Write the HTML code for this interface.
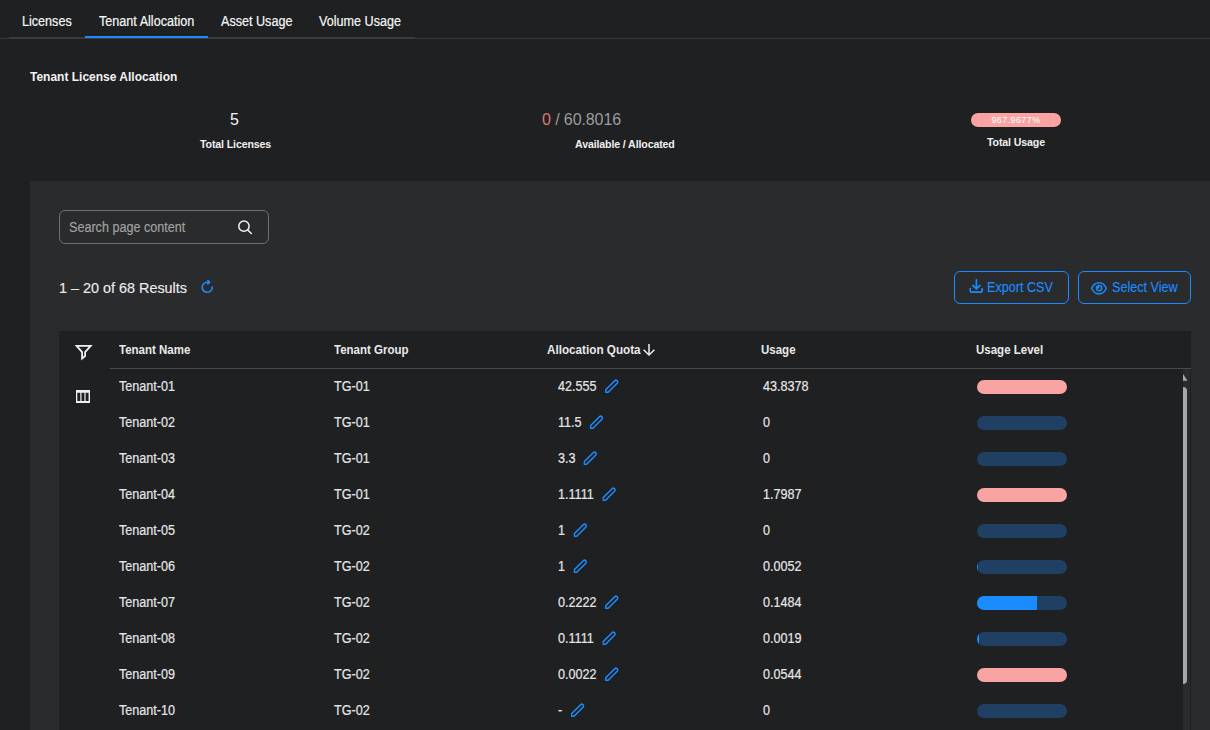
<!DOCTYPE html>
<html><head><meta charset="utf-8">
<style>
*{box-sizing:border-box;margin:0;padding:0}
html,body{width:1210px;height:730px;overflow:hidden;background:#1f2022;font-family:"Liberation Sans",sans-serif;color:#e6e6e6}
.a{position:absolute;white-space:nowrap}
.tab{font-size:14px;line-height:13px;top:15px;transform:scaleX(0.9);transform-origin:0 0;color:#f6f6f6;-webkit-text-stroke:0.2px #f6f6f6}
.line1{left:0;top:38px;width:1210px;height:1px;background:#39393b}
.line2{left:9px;top:37px;width:406px;height:2px;background:#3b3b3d}
.act{left:85px;top:36px;width:123px;height:2px;background:#1a8cff}
.title{left:30px;top:71px;font-size:12px;line-height:12px;font-weight:700;color:#f2f2f2}
.big{font-size:16px;line-height:16px;top:112px}
.lbl{font-size:10.6px;line-height:11px;letter-spacing:-0.12px;font-weight:700;color:#f0f0f0}
.pill{left:971px;top:113px;width:90px;height:14px;border-radius:7px;background:#f9a3a3;color:#fff;font-size:9px;line-height:14px;text-align:center;letter-spacing:0.4px}
.panel{left:30px;top:181px;width:1180px;height:549px;background:#2a2b2d}
.search{left:59px;top:210px;width:210px;height:34px;border:1px solid #707072;border-radius:6px}
.ph{left:69px;top:221px;font-size:14px;transform:scaleX(0.9);transform-origin:0 0;line-height:13px;color:#a3a3a3;-webkit-text-stroke:0.15px #a3a3a3}
.res{left:59px;top:281px;font-size:14.4px;line-height:14px;color:#ececec;-webkit-text-stroke:0.15px #ececec}
.btn{top:271px;height:33px;border:1px solid #1a8cff;border-radius:6px}
.btxt{top:281px;font-size:14px;transform:scaleX(0.9);transform-origin:0 0;line-height:13px;color:#1a8cff;-webkit-text-stroke:0.15px #1a8cff}
.table{left:59px;top:331px;width:1132px;height:399px;background:#1f2022}
.hline{left:110px;top:368px;width:1081px;height:1px;background:#4a4a4c}
.th{top:344px;font-size:13px;transform:scaleX(0.885);transform-origin:0 0;line-height:12px;font-weight:700;color:#e9e9e9}
.td{font-size:14px;line-height:13px;transform:scaleX(0.9);transform-origin:0 0;color:#e6e6e6;-webkit-text-stroke:0.2px #e6e6e6}
.bar{left:977px;width:90px;height:14px;border-radius:7px;background:#1f3f63;overflow:hidden}
.bar.pink{background:#f9a3a3}
.bar i{display:block;height:100%;background:#1a8cff}
.track{left:1183px;top:369px;width:7px;height:361px;background:#2b2b2b}
</style></head><body>
<div class="a tab" style="left:22px">Licenses</div>
<div class="a tab" style="left:99px">Tenant Allocation</div>
<div class="a tab" style="left:221px">Asset Usage</div>
<div class="a tab" style="left:319px">Volume Usage</div>
<div class="a line1"></div>
<div class="a line2"></div>
<div class="a act"></div>

<div class="a title">Tenant License Allocation</div>
<div class="a big" style="left:230px;color:#f2f2f2">5</div>
<div class="a lbl" style="left:200px;top:139px">Total Licenses</div>
<div class="a big" style="left:542px;color:#9c9c9c;letter-spacing:-0.1px"><span style="color:#de776e">0</span> / 60.8016</div>
<div class="a lbl" style="left:575px;top:139px">Available / Allocated</div>
<div class="a pill">967.9677%</div>
<div class="a lbl" style="left:987px;top:137px">Total Usage</div>

<div class="a panel"></div>
<div class="a search"></div>
<div class="a ph">Search page content</div>
<svg class="a" style="left:234px;top:216px" width="20" height="20" viewBox="0 0 20 20"><circle cx="9.95" cy="10.2" r="5.15" fill="none" stroke="#f2f2f2" stroke-width="1.5"/><path d="M13.8 14 L17.3 17.5" stroke="#f2f2f2" stroke-width="1.5" stroke-linecap="round"/></svg>
<div class="a res">1 – 20 of 68 Results</div>
<svg class="a" style="left:200px;top:278px" width="16" height="16" viewBox="0 0 16 16" fill="none" stroke="#1a8cff" stroke-width="1.6" stroke-linecap="round" stroke-linejoin="round"><path d="M12.3 9.0 A5.05 5.05 0 1 1 7.25 4.2 L9.4 4.2"/><path d="M7.8 2.5 L9.6 4.2 L7.8 5.9"/></svg>

<div class="a btn" style="left:954px;width:115px"></div>
<svg class="a" style="left:968px;top:278px" width="16" height="16" viewBox="0 0 16 16" fill="none" stroke="#1a8cff" stroke-width="1.7" stroke-linecap="round" stroke-linejoin="round"><path d="M2.3 10.5 V13 Q2.3 14.2 3.5 14.2 H12.9 Q14.1 14.2 14.1 13 V10.5"/><path d="M8.4 1.8 V10.5"/><path d="M4.8 7.5 L8.4 10.6 L11.9 7.5"/></svg>
<div class="a btxt" style="left:987px">Export CSV</div>
<div class="a btn" style="left:1078px;width:113px"></div>
<svg class="a" style="left:1089px;top:280px" width="20" height="16" viewBox="0 0 20 16" fill="none" stroke="#1a8cff" stroke-width="1.5"><path d="M2.65 8.3 C4.2 4.6 6.8 2.65 10 2.65 C13.2 2.65 15.8 4.6 17.35 8.3 C15.8 12 13.2 13.95 10 13.95 C6.8 13.95 4.2 12 2.65 8.3 Z"/><circle cx="10.1" cy="8.1" r="2.65"/><path d="M10.3 8.4 V5.9 A2.3 2.3 0 0 0 7.8 8.4 Z" fill="#1a8cff" stroke="none"/></svg>
<div class="a btxt" style="left:1112px">Select View</div>

<div class="a table"></div>
<svg class="a" style="left:75px;top:344px" width="18" height="17" viewBox="0 0 18 17" fill="none" stroke="#f0f0f0" stroke-width="1.8" stroke-linejoin="miter"><path d="M1.6 1.9 L15.7 1.9 L10.1 8.1 L10.1 12 L7.1 14.6 L7.1 8.1 Z"/></svg>
<svg class="a" style="left:75px;top:389px" width="16" height="15" viewBox="0 0 16 15"><path fill="#f0f0f0" fill-rule="evenodd" d="M1 1 H15 V14 H1 Z M2.3 3.8 V11.9 H5.3 V3.8 Z M6.5 3.8 V11.9 H9.4 V3.8 Z M10.6 3.8 V11.9 H13.6 V3.8 Z"/></svg>
<div class="a hline"></div>
<div class="a th" style="left:119px">Tenant Name</div>
<div class="a th" style="left:334px">Tenant Group</div>
<div class="a th" style="left:547px;transform:scaleX(0.9)">Allocation Quota</div>
<svg class="a" style="left:641px;top:342px" width="16" height="16" viewBox="0 0 16 16" fill="none" stroke="#f0f0f0" stroke-width="1.5"><path d="M8 2 V12.6"/><path d="M2.6 7.8 L8 13 L13.4 7.8"/></svg>
<div class="a th" style="left:761px">Usage</div>
<div class="a th" style="left:976px">Usage Level</div>

<!--ROWS-->
<div class="a td" style="left:119px;top:380px">Tenant-01</div>
<div class="a td" style="left:334px;top:380px">TG-01</div>
<div class="a td" style="left:558px;top:380px">42.555<svg width="14" height="14" viewBox="0 0 14 14" style="vertical-align:top;margin-left:10px;margin-top:-1px;transform:scaleX(1.111)" fill="none" stroke="#1a8cff" stroke-width="1.5" stroke-linejoin="round"><path d="M0.75 10.78 L9.76 1.76 A1.75 1.75 0 0 1 12.24 4.24 L3.22 13.25 L0.75 13.25 Z"/></svg></div>
<div class="a td" style="left:763px;top:380px">43.8378</div>
<div class="a bar pink" style="top:380px"></div>
<div class="a td" style="left:119px;top:416px">Tenant-02</div>
<div class="a td" style="left:334px;top:416px">TG-01</div>
<div class="a td" style="left:558px;top:416px">11.5<svg width="14" height="14" viewBox="0 0 14 14" style="vertical-align:top;margin-left:10px;margin-top:-1px;transform:scaleX(1.111)" fill="none" stroke="#1a8cff" stroke-width="1.5" stroke-linejoin="round"><path d="M0.75 10.78 L9.76 1.76 A1.75 1.75 0 0 1 12.24 4.24 L3.22 13.25 L0.75 13.25 Z"/></svg></div>
<div class="a td" style="left:763px;top:416px">0</div>
<div class="a bar" style="top:416px"></div>
<div class="a td" style="left:119px;top:452px">Tenant-03</div>
<div class="a td" style="left:334px;top:452px">TG-01</div>
<div class="a td" style="left:558px;top:452px">3.3<svg width="14" height="14" viewBox="0 0 14 14" style="vertical-align:top;margin-left:10px;margin-top:-1px;transform:scaleX(1.111)" fill="none" stroke="#1a8cff" stroke-width="1.5" stroke-linejoin="round"><path d="M0.75 10.78 L9.76 1.76 A1.75 1.75 0 0 1 12.24 4.24 L3.22 13.25 L0.75 13.25 Z"/></svg></div>
<div class="a td" style="left:763px;top:452px">0</div>
<div class="a bar" style="top:452px"></div>
<div class="a td" style="left:119px;top:488px">Tenant-04</div>
<div class="a td" style="left:334px;top:488px">TG-01</div>
<div class="a td" style="left:558px;top:488px">1.1111<svg width="14" height="14" viewBox="0 0 14 14" style="vertical-align:top;margin-left:10px;margin-top:-1px;transform:scaleX(1.111)" fill="none" stroke="#1a8cff" stroke-width="1.5" stroke-linejoin="round"><path d="M0.75 10.78 L9.76 1.76 A1.75 1.75 0 0 1 12.24 4.24 L3.22 13.25 L0.75 13.25 Z"/></svg></div>
<div class="a td" style="left:763px;top:488px">1.7987</div>
<div class="a bar pink" style="top:488px"></div>
<div class="a td" style="left:119px;top:524px">Tenant-05</div>
<div class="a td" style="left:334px;top:524px">TG-02</div>
<div class="a td" style="left:558px;top:524px">1<svg width="14" height="14" viewBox="0 0 14 14" style="vertical-align:top;margin-left:10px;margin-top:-1px;transform:scaleX(1.111)" fill="none" stroke="#1a8cff" stroke-width="1.5" stroke-linejoin="round"><path d="M0.75 10.78 L9.76 1.76 A1.75 1.75 0 0 1 12.24 4.24 L3.22 13.25 L0.75 13.25 Z"/></svg></div>
<div class="a td" style="left:763px;top:524px">0</div>
<div class="a bar" style="top:524px"></div>
<div class="a td" style="left:119px;top:560px">Tenant-06</div>
<div class="a td" style="left:334px;top:560px">TG-02</div>
<div class="a td" style="left:558px;top:560px">1<svg width="14" height="14" viewBox="0 0 14 14" style="vertical-align:top;margin-left:10px;margin-top:-1px;transform:scaleX(1.111)" fill="none" stroke="#1a8cff" stroke-width="1.5" stroke-linejoin="round"><path d="M0.75 10.78 L9.76 1.76 A1.75 1.75 0 0 1 12.24 4.24 L3.22 13.25 L0.75 13.25 Z"/></svg></div>
<div class="a td" style="left:763px;top:560px">0.0052</div>
<div class="a bar" style="top:560px"><i style="width:0.52%"></i></div>
<div class="a td" style="left:119px;top:596px">Tenant-07</div>
<div class="a td" style="left:334px;top:596px">TG-02</div>
<div class="a td" style="left:558px;top:596px">0.2222<svg width="14" height="14" viewBox="0 0 14 14" style="vertical-align:top;margin-left:10px;margin-top:-1px;transform:scaleX(1.111)" fill="none" stroke="#1a8cff" stroke-width="1.5" stroke-linejoin="round"><path d="M0.75 10.78 L9.76 1.76 A1.75 1.75 0 0 1 12.24 4.24 L3.22 13.25 L0.75 13.25 Z"/></svg></div>
<div class="a td" style="left:763px;top:596px">0.1484</div>
<div class="a bar" style="top:596px"><i style="width:66.8%"></i></div>
<div class="a td" style="left:119px;top:632px">Tenant-08</div>
<div class="a td" style="left:334px;top:632px">TG-02</div>
<div class="a td" style="left:558px;top:632px">0.1111<svg width="14" height="14" viewBox="0 0 14 14" style="vertical-align:top;margin-left:10px;margin-top:-1px;transform:scaleX(1.111)" fill="none" stroke="#1a8cff" stroke-width="1.5" stroke-linejoin="round"><path d="M0.75 10.78 L9.76 1.76 A1.75 1.75 0 0 1 12.24 4.24 L3.22 13.25 L0.75 13.25 Z"/></svg></div>
<div class="a td" style="left:763px;top:632px">0.0019</div>
<div class="a bar" style="top:632px"><i style="width:1.71%"></i></div>
<div class="a td" style="left:119px;top:668px">Tenant-09</div>
<div class="a td" style="left:334px;top:668px">TG-02</div>
<div class="a td" style="left:558px;top:668px">0.0022<svg width="14" height="14" viewBox="0 0 14 14" style="vertical-align:top;margin-left:10px;margin-top:-1px;transform:scaleX(1.111)" fill="none" stroke="#1a8cff" stroke-width="1.5" stroke-linejoin="round"><path d="M0.75 10.78 L9.76 1.76 A1.75 1.75 0 0 1 12.24 4.24 L3.22 13.25 L0.75 13.25 Z"/></svg></div>
<div class="a td" style="left:763px;top:668px">0.0544</div>
<div class="a bar pink" style="top:668px"></div>
<div class="a td" style="left:119px;top:704px">Tenant-10</div>
<div class="a td" style="left:334px;top:704px">TG-02</div>
<div class="a td" style="left:558px;top:704px">-<svg width="14" height="14" viewBox="0 0 14 14" style="vertical-align:top;margin-left:10px;margin-top:-1px;transform:scaleX(1.111)" fill="none" stroke="#1a8cff" stroke-width="1.5" stroke-linejoin="round"><path d="M0.75 10.78 L9.76 1.76 A1.75 1.75 0 0 1 12.24 4.24 L3.22 13.25 L0.75 13.25 Z"/></svg></div>
<div class="a td" style="left:763px;top:704px">0</div>
<div class="a bar" style="top:704px"></div>
<!--/ROWS-->
<div class="a track"></div>
<svg class="a" style="left:1183px;top:373px" width="7" height="9" viewBox="0 0 7 9"><path d="M0 1 L4.5 7.8 H0 Z" fill="#a8a8a8"/></svg>
<div class="a" style="left:1183px;top:387px;width:4px;height:297px;background:#a8a8a8;border-radius:0 4px 4px 0"></div>
</body></html>
